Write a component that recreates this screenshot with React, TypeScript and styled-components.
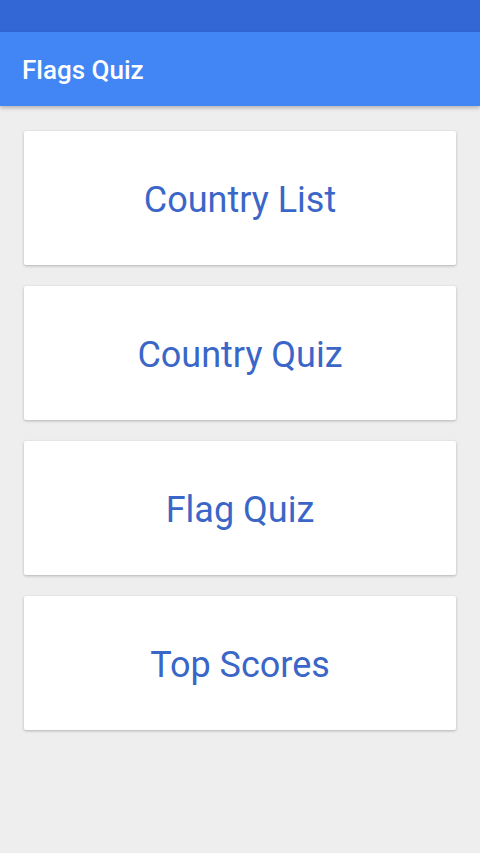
import styled, { createGlobalStyle } from 'styled-components'

const GlobalStyle = createGlobalStyle`
  html, body {
    margin: 0;
    padding: 0;
    background: #eeeeee;
    font-family: Roboto, "Noto Sans", sans-serif;
  }
`

const Screen = styled.div`
  width: 480px;
  min-height: 853px;
  background: #eeeeee;
  display: flex;
  flex-direction: column;
`

const StatusBar = styled.div`
  height: 32px;
  background: #3367d6;
`

const AppBar = styled.header`
  height: 74px;
  background: #4285f4;
  display: flex;
  align-items: center;
  padding: 2px 22px 0;
  box-sizing: border-box;
  box-shadow: 0 2px 4px rgba(0, 0, 0, 0.25);
  position: relative;
  z-index: 1;
`

const Title = styled.h1`
  margin: 0;
  color: #ffffff;
  font-size: 26px;
  font-weight: 500;
`

const Menu = styled.main`
  display: flex;
  flex-direction: column;
  gap: 21px;
  padding: 25px 24px;
`

const MenuCard = styled.button`
  height: 134px;
  padding: 4px 0 0;
  border: none;
  border-radius: 2px;
  background: #ffffff;
  box-shadow: 0 1px 3px rgba(0, 0, 0, 0.25);
  color: #3a66c8;
  font-family: Roboto, "Noto Sans", sans-serif;
  font-size: 36px;
  font-weight: 400;
  cursor: pointer;
`

const items = ['Country List', 'Country Quiz', 'Flag Quiz', 'Top Scores']

export default function App() {
  return (
    <Screen>
      <GlobalStyle />
      <StatusBar />
      <AppBar>
        <Title>Flags Quiz</Title>
      </AppBar>
      <Menu>
        {items.map(item => (
          <MenuCard key={item}>{item}</MenuCard>
        ))}
      </Menu>
    </Screen>
  )
}
